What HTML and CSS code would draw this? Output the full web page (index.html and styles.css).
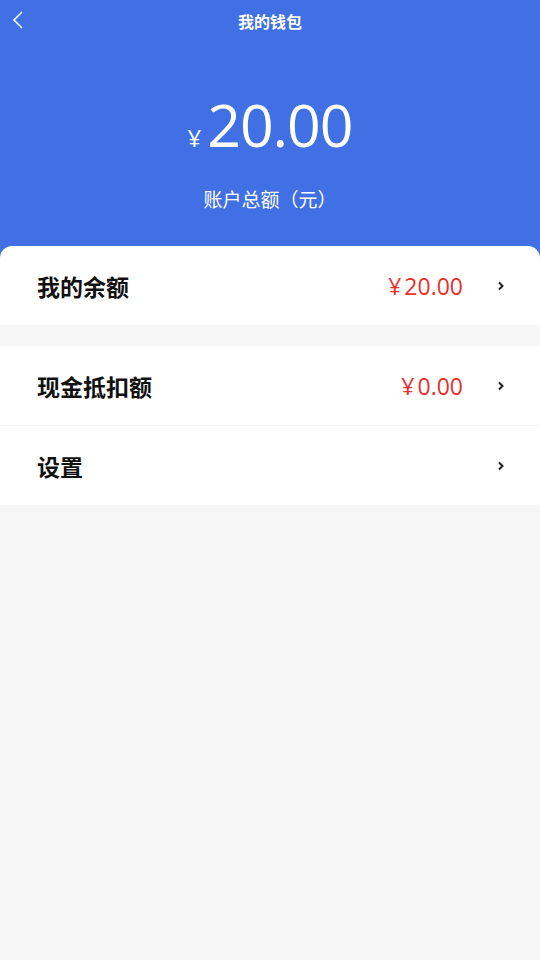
FILE: index.html
```html
<!DOCTYPE html>
<html lang="zh">
<head>
  <meta charset="UTF-8">
  <title>我的钱包</title>
  <link rel="stylesheet" href="styles.css">
</head>
<body>
<div class="wallet-header">
  <div class="nav-bar">
    <a class="nav-back" href="javascript:void(0);">
      <svg width="12" height="18" viewBox="0 0 12 18"><polyline points="10,1 2,9 10,17" fill="none" stroke="#fff" stroke-width="1.6"/></svg>
    </a>
    <div class="nav-title">我的钱包</div>
  </div>
  <div class="total">
    <span class="total-sign">¥</span><span class="total-num">20.00</span>
  </div>
  <div class="total-label">账户总额（元）</div>
</div>
<div class="wallet-list">
  <div class="group first">
    <div class="cell">
      <span class="cell-name">我的余额</span>
      <span class="cell-value"><i>¥</i>20.00</span>
      <svg class="arrow" width="8" height="10" viewBox="0 0 8 10"><polyline points="2,1.5 5.5,5 2,8.5" fill="none" stroke="#222" stroke-width="2"/></svg>
    </div>
  </div>
  <div class="group">
    <div class="cell line">
      <span class="cell-name">现金抵扣额</span>
      <span class="cell-value"><i>¥</i>0.00</span>
      <svg class="arrow" width="8" height="10" viewBox="0 0 8 10"><polyline points="2,1.5 5.5,5 2,8.5" fill="none" stroke="#222" stroke-width="2"/></svg>
    </div>
    <div class="cell">
      <span class="cell-name">设置</span>
      <svg class="arrow" width="8" height="10" viewBox="0 0 8 10"><polyline points="2,1.5 5.5,5 2,8.5" fill="none" stroke="#222" stroke-width="2"/></svg>
    </div>
  </div>
</div>
</body>
</html>
```

FILE: styles.css
```css
html, body {
  margin: 0px;
  padding: 0px;
  background: #f6f6f6;
  font-family: "Open Sans", "Noto Sans CJK SC", sans-serif;
}

a {
  text-decoration: none;
}

.wallet-header {
  background: #4170e4;
  height: 260px;
  color: #ffffff;
  text-align: center;
}

.nav-bar {
  height: 44px;
  display: flex;
  align-items: center;
  justify-content: center;
  position: relative;
}

.nav-back {
  position: absolute;
  left: 12px;
  top: 11px;
}

.nav-title {
  font-size: 16px;
  font-weight: bold;
  margin-top: -2px;
}

.total {
  display: flex;
  justify-content: center;
  align-items: baseline;
  margin-top: 40px;
  height: 80px;
  line-height: 80px;
}

.total-sign {
  font-size: 24px;
  margin-right: 6px;
}

.total-num {
  font-size: 59px;
  letter-spacing: -1px;
}

.total-label {
  font-size: 19px;
  margin-top: 21px;
}

.wallet-list {
  margin-top: -14px;
}

.group {
  background: #ffffff;
  margin-bottom: 21px;
}

.group.first {
  border-radius: 12px 12px 0px 0px;
}

.cell {
  height: 79px;
  display: flex;
  align-items: center;
  padding: 0px 35px 0px 37px;
}

.cell.line {
  border-bottom: 1px solid #f3f3f3;
}

.cell-name {
  flex: 1;
  font-size: 23px;
  font-weight: bold;
  color: #111111;
}

.cell-value {
  font-size: 23px;
  color: #e8302c;
  margin-right: 34px;
}

.cell-value i {
  font-style: normal;
  margin-right: 3px;
}
```
